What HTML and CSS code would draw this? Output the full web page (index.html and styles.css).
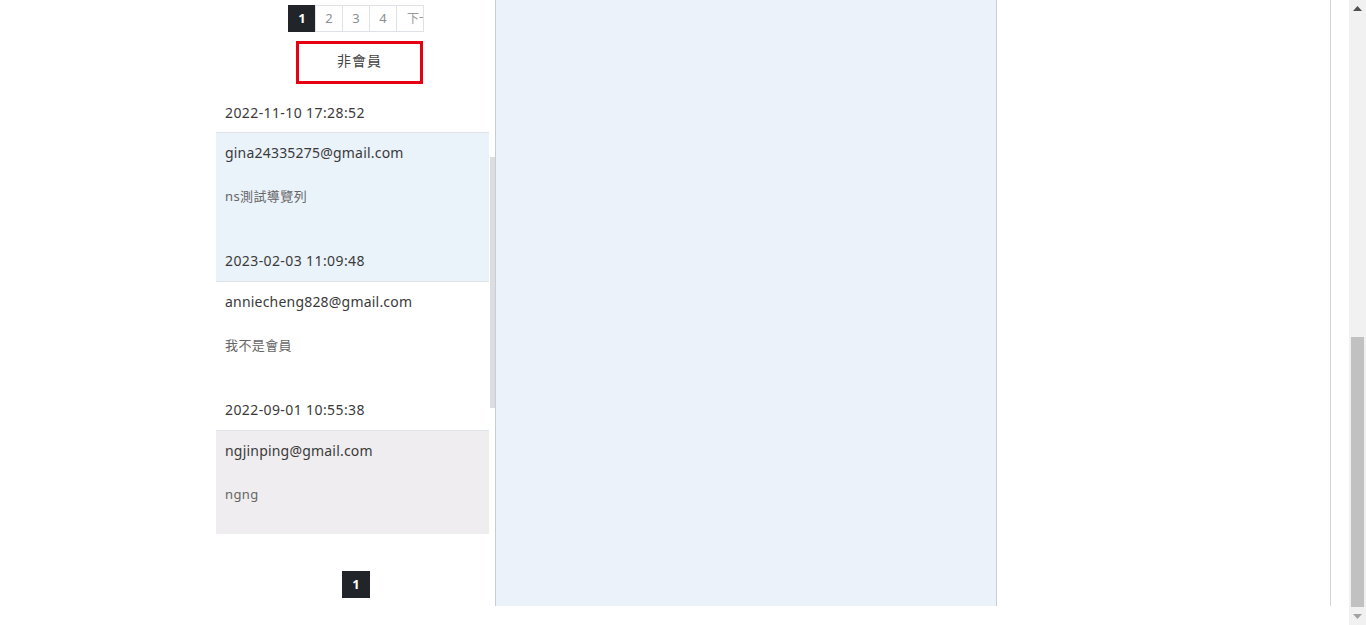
FILE: index.html
```html
<!DOCTYPE html>
<html lang="zh-Hant">
<head>
    <meta charset="UTF-8">
    <meta name="viewport" content="width=device-width, initial-scale=1.0">
    <title>留言管理</title>
    <link rel="stylesheet" href="styles.css">
</head>
<body>
    <div class="page">
        <div class="layout">
            <div class="side">
                <div class="side-main">
                    <div class="pager pager-top">
                        <a class="page-link active">1</a>
                        <a class="page-link">2</a>
                        <a class="page-link">3</a>
                        <a class="page-link">4</a>
                        <a class="page-link next">下一頁</a>
                    </div>
                    <button type="button" class="filter-btn">非會員</button>

                    <div class="msg-list">
                        <div class="msg msg-cut">
                            <div class="msg-date">2022-11-10 17:28:52</div>
                        </div>
                        <div class="msg msg-active">
                            <div class="msg-mail">gina24335275@gmail.com</div>
                            <div class="msg-text">ns測試導覽列</div>
                            <div class="msg-date">2023-02-03 11:09:48</div>
                        </div>
                        <div class="msg">
                            <div class="msg-mail">anniecheng828@gmail.com</div>
                            <div class="msg-text">我不是會員</div>
                            <div class="msg-date">2022-09-01 10:55:38</div>
                        </div>
                        <div class="msg msg-hover">
                            <div class="msg-mail">ngjinping@gmail.com</div>
                            <div class="msg-text">ngng</div>
                        </div>
                    </div>

                    <div class="pager pager-bottom">
                        <a class="page-link active">1</a>
                    </div>
                </div>
                <div class="side-bar">
                    <div class="side-thumb"></div>
                </div>
            </div>
            <div class="detail"></div>
            <div class="filler"></div>
        </div>
    </div>

    <!-- window scrollbar, page is scrolled to the bottom -->
    <div class="win-scroll">
        <div class="win-arrow">
            <svg width="9" height="5" viewBox="0 0 9 5"><path d="M0 5 L4.5 0 L9 5 Z" fill="#505050"/></svg>
        </div>
        <div class="win-track">
            <div class="win-thumb"></div>
        </div>
        <div class="win-arrow">
            <svg width="9" height="5" viewBox="0 0 9 5"><path d="M0 0 L9 0 L4.5 5 Z" fill="#a3a3a3"/></svg>
        </div>
    </div>
</body>
</html>
```

FILE: styles.css
```css
body{
    margin: 0;
    height: 625px;
    overflow: hidden;
    display: flex;
    background-color: #fff;
    font-family: 'Noto Sans', 'Noto Sans CJK TC', sans-serif;
    color: #3a3a3a;
}
.page{
    flex: 1;
}
.layout{
    display: flex;
    height: 606px;
    padding-left: 216px;
}
.side{
    display: flex;
    width: 279px;
}
.side-main{
    width: 274px;
    display: flex;
    flex-direction: column;
    justify-content: flex-end;
    padding-bottom: 8px;
}
.side-bar{
    width: 5px;
    display: flex;
    flex-direction: column;
    justify-content: flex-end;
}
.side-thumb{
    height: 251px;
    margin-bottom: 198px;
    background-color: #dcdde0;
}

/* pagination */
.pager{
    display: flex;
    justify-content: center;
    padding-left: 7px;
}
.page-link{
    box-sizing: border-box;
    width: 28px;
    height: 27px;
    margin-left: -1px;
    border: 1px solid #dee2e6;
    background-color: #fff;
    color: #8a9096;
    font-size: 13px;
    line-height: 25px;
    text-align: center;
    overflow: hidden;
    white-space: nowrap;
}
.page-link.active{
    background-color: #212529;
    border-color: #212529;
    color: #fff;
    font-weight: bold;
}
.page-link.next{
    text-align: left;
    padding-left: 10px;
    font-size: 12px;
    color: #999;
}

.filter-btn{
    box-sizing: border-box;
    width: 127px;
    height: 43px;
    margin: 9px 0 0 80px;
    padding: 0 0 5px;
    border: 3px solid #e60012;
    background-color: #fff;
    font-family: inherit;
    font-size: 14px;
    letter-spacing: 1px;
    color: #444;
}

/* message list */
.msg-list{
    margin-top: 10px;
}
.msg{
    padding: 10px 0 10px 9px;
    border-bottom: 1px solid #dfe2e6;
    font-size: 14px;
    letter-spacing: 0.4px;
    line-height: 20px;
    margin-right: 1px;
}
.msg-cut{
    padding-top: 9px;
    padding-bottom: 9px;
}
.msg-active{
    background-color: #eaf2fa;
}
.msg-hover{
    background-color: #efedef;
    border-bottom: none;
    padding-bottom: 30px;
}
.msg-mail{
    letter-spacing: 0.2px;
}
.msg-text{
    margin-top: 23px;
    font-size: 13px;
    color: #666;
}
.msg-date{
    margin-top: 45px;
}
.msg-cut .msg-date{
    margin-top: 0;
}
.pager-bottom{
    margin-top: 37px;
}

.detail{
    width: 500px;
    border-left: 1px solid #c6cdd6;
    border-right: 1px solid #c6cdd6;
    background-color: #ebf2f9;
}
.filler{
    flex: 1;
    border-right: 1px solid #d6d6d6;
    margin-right: 18px;
}

/* fake window scrollbar */
.win-scroll{
    width: 17px;
    height: 625px;
    display: flex;
    flex-direction: column;
    background-color: #f1f1f1;
}
.win-arrow{
    height: 17px;
    display: flex;
    justify-content: center;
    align-items: center;
}
.win-track{
    flex: 1;
    display: flex;
    flex-direction: column;
    justify-content: flex-end;
}
.win-thumb{
    height: 270px;
    margin: 0 2px 1px;
    background-color: #c1c1c1;
}
```
